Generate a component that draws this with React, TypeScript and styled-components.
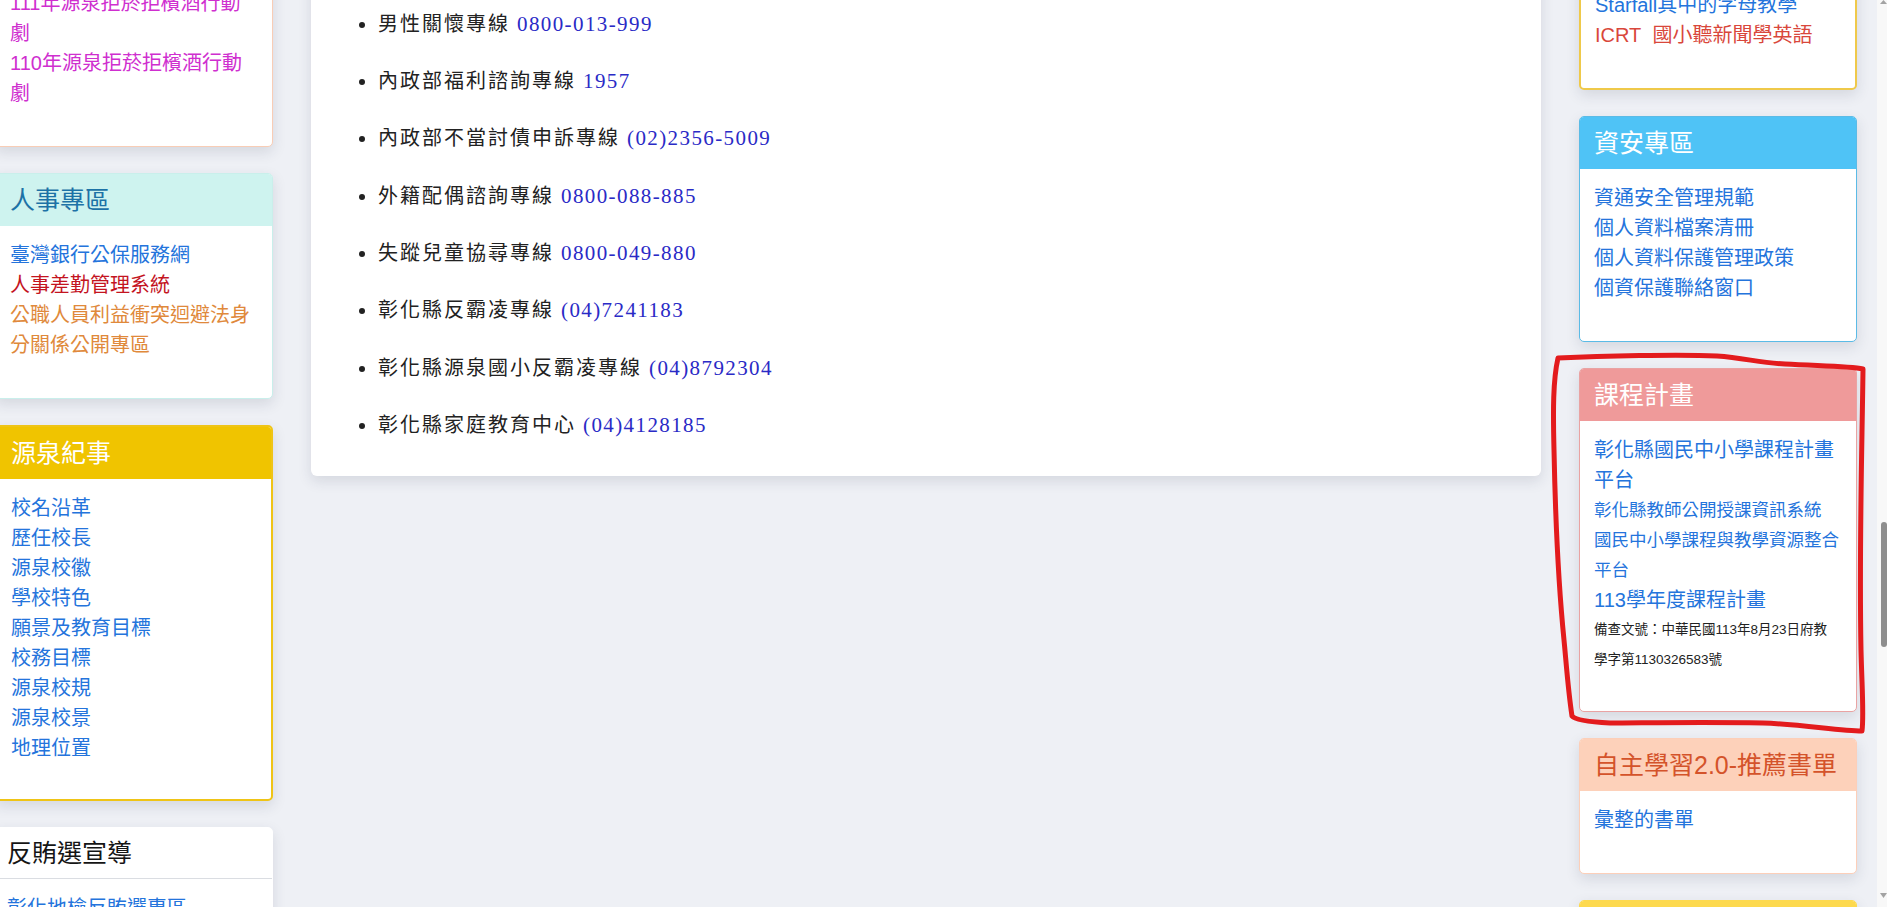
import React from "react";
import styled, { createGlobalStyle } from "styled-components";

const Global = createGlobalStyle`
  html, body {
    margin: 0;
    padding: 0;
    height: 907px;
    overflow: hidden;
    background: #eef0f5;
  }
  body {
    font-family: "Liberation Sans", "Noto Sans CJK TC", sans-serif;
  }
  * { box-sizing: border-box; }
`;

const Viewport = styled.div`
  position: relative;
  display: flex;
  width: 1887px;
  height: 907px;
  overflow: hidden;
  background: #eef0f5;
`;

const Page = styled.div`
  flex: 1;
  display: grid;
  grid-template-columns: 278px 1230px 278px;
  column-gap: 38px;
  align-items: start;
  margin-left: -5px;
`;

const Column = styled.div<{ $offset: number }>`
  display: flex;
  flex-direction: column;
  gap: 26px;
  margin-top: ${(p) => p.$offset}px;
`;

const Card = styled.section<{ $border: string; $bw?: number }>`
  background: #fff;
  border: ${(p) => p.$bw ?? 1}px solid ${(p) => p.$border};
  border-radius: 5px;
  overflow: hidden;
  box-shadow: 0 5px 14px rgba(40, 50, 80, 0.13);
`;

const CardHeader = styled.h3<{ $bg: string; $color: string; $divider?: boolean; $pad?: number }>`
  margin: 0;
  height: ${(p) => (p.$divider ? 51 : 52)}px;
  display: flex;
  align-items: center;
  padding: 0 14px 0 ${(p) => p.$pad ?? 14}px;
  background: ${(p) => p.$bg};
  color: ${(p) => p.$color};
  font-size: 25px;
  font-weight: 400;
  line-height: 1;
  white-space: nowrap;
  border-bottom: ${(p) => (p.$divider ? "1px solid #dadde2" : "none")};
`;

const CardBody = styled.div<{ $pad?: number; $bottom?: number }>`
  display: flex;
  flex-direction: column;
  align-items: flex-start;
  padding: 14px 16px ${(p) => p.$bottom ?? 38}px ${(p) => p.$pad ?? 14}px;
`;

const Link = styled.a<{ $color?: string; $size?: number }>`
  color: ${(p) => p.$color ?? "#2474dc"};
  font-size: ${(p) => p.$size ?? 20}px;
  line-height: 30px;
  text-decoration: none;
  white-space: pre-wrap;
`;

const Note = styled.p`
  margin: 0;
  font-size: 13.5px;
  line-height: 30px;
  color: #222;
`;

const MainCard = styled.section`
  background: #fff;
  border-radius: 6px;
  box-shadow: 0 5px 14px rgba(40, 50, 80, 0.13);
  padding: 20px 26px 22px;
`;

const HotlineList = styled.ul`
  margin: 0;
  padding-left: 41px;
  list-style: disc;
  font-family: "Liberation Serif", "Noto Sans CJK TC", serif;
  font-size: 20px;
  letter-spacing: 2px;
  color: #222;
`;

const Hotline = styled.li`
  line-height: 57.3px;
`;

const Phone = styled.span`
  color: #2a2ac6;
  font-size: 21px;
  letter-spacing: 1.4px;
`;

const Scrollbar = styled.div`
  flex: none;
  width: 10px;
  height: 907px;
  background: #f8f8f8;
  display: flex;
  flex-direction: column;
  align-items: flex-end;
`;

const Arrow = styled.svg`
  display: block;
  flex: none;
`;

const Thumb = styled.div<{ $top: number; $height: number }>`
  flex: none;
  width: 6px;
  margin-top: ${(p) => p.$top}px;
  height: ${(p) => p.$height}px;
  border-radius: 3px;
  background: #8e8e8e;
`;

const Spacer = styled.div`
  flex: 1;
`;

const Annotation = styled.svg`
  position: absolute;
  left: 0;
  top: 0;
  pointer-events: none;
`;

type Item = { text: string; color?: string; size?: number };

type PanelProps = {
  title: string;
  border: string;
  bw?: number;
  bg: string;
  titleColor: string;
  divider?: boolean;
  pad?: number;
  bottom?: number;
  items: Item[];
  note?: string;
};

function Panel({ title, border, bw, bg, titleColor, divider, pad, bottom, items, note }: PanelProps) {
  return (
    <Card $border={border} $bw={bw}>
      <CardHeader $bg={bg} $color={titleColor} $divider={divider} $pad={pad}>
        {title}
      </CardHeader>
      <CardBody $pad={pad} $bottom={bottom}>
        {items.map((it) => (
          <Link key={it.text} href="#" $color={it.color} $size={it.size}>
            {it.text}
          </Link>
        ))}
        {note && <Note>{note}</Note>}
      </CardBody>
    </Card>
  );
}

const MAGENTA = "#cf2fcf";

const hotlines: [string, string][] = [
  ["保護專線", "113"],
  ["反詐騙諮詢專線", "165"],
  ["安心專線", "1925"],
  ["男性關懷專線", "0800-013-999"],
  ["內政部福利諮詢專線", "1957"],
  ["內政部不當討債申訴專線", "(02)2356-5009"],
  ["外籍配偶諮詢專線", "0800-088-885"],
  ["失蹤兒童協尋專線", "0800-049-880"],
  ["彰化縣反霸凌專線", "(04)7241183"],
  ["彰化縣源泉國小反霸凌專線", "(04)8792304"],
  ["彰化縣家庭教育中心", "(04)4128185"],
];

export default function App() {
  return (
    <Viewport>
      <Global />
      <Page>
        <Column $offset={-139}>
          <Panel
            title="健康促進"
            border="#f8cdb6"
            bg="#fde1d2"
            titleColor="#c8552e"
            items={[
              { text: "112年源泉拒菸拒檳酒行動劇", color: MAGENTA },
              { text: "111年源泉拒菸拒檳酒行動劇", color: MAGENTA },
              { text: "110年源泉拒菸拒檳酒行動劇", color: MAGENTA },
            ]}
          />
          <Panel
            title="人事專區"
            border="#c9efeb"
            bg="#cef3ef"
            titleColor="#1d72a6"
            items={[
              { text: "臺灣銀行公保服務網" },
              { text: "人事差勤管理系統", color: "#c4141f" },
              { text: "公職人員利益衝突迴避法身分關係公開專區", color: "#e0893b" },
            ]}
          />
          <Panel
            title="源泉紀事"
            border="#efc416"
            bw={2}
            bg="#f0c400"
            titleColor="#ffffff"
            bottom={36}
            items={[
              { text: "校名沿革" },
              { text: "歷任校長" },
              { text: "源泉校徽" },
              { text: "學校特色" },
              { text: "願景及教育目標" },
              { text: "校務目標" },
              { text: "源泉校規" },
              { text: "源泉校景" },
              { text: "地理位置" },
            ]}
          />
          <Panel
            title="反賄選宣導"
            border="#ffffff"
            bg="#ffffff"
            titleColor="#151515"
            divider
            pad={11}
            items={[{ text: "彰化地檢反賄選專區" }]}
          />
        </Column>

        <Column $offset={-196}>
          <MainCard>
            <HotlineList>
              {hotlines.map(([name, num]) => (
                <Hotline key={name}>
                  {name} <Phone>{num}</Phone>
                </Hotline>
              ))}
            </HotlineList>
          </MainCard>
        </Column>

        <Column $offset={-138}>
          <Panel
            title="英語學習"
            border="#efc94a"
            bw={2}
            bg="#fdd94e"
            titleColor="#ffffff"
            items={[
              { text: "Cool English" },
              { text: "線上英文繪本" },
              { text: "Starfall其中的字母教學" },
              { text: "ICRT\u00a0\u00a0國小聽新聞學英語", color: "#d9473b" },
            ]}
          />
          <Panel
            title="資安專區"
            border="#5bbbe6"
            bg="#4fc3f6"
            titleColor="#ffffff"
            items={[
              { text: "資通安全管理規範" },
              { text: "個人資料檔案清冊" },
              { text: "個人資料保護管理政策" },
              { text: "個資保護聯絡窗口" },
            ]}
          />
          <Panel
            title="課程計畫"
            border="#e9a3a3"
            bg="#ef9a9a"
            titleColor="#ffffff"
            bottom={36}
            items={[
              { text: "彰化縣國民中小學課程計畫平台" },
              { text: "彰化縣教師公開授課資訊系統", size: 17.5 },
              { text: "國民中小學課程與教學資源整合平台", size: 17.5 },
              { text: "113學年度課程計畫" },
            ]}
            note="備查文號：中華民國113年8月23日府教學字第1130326583號"
          />
          <Panel
            title="自主學習2.0-推薦書單"
            border="#fccfb9"
            bg="#fdd1ba"
            titleColor="#d4532a"
            items={[{ text: "彙整的書單" }]}
          />
          <Panel
            title="學習資源"
            border="#fdd94e"
            bg="#fdd94e"
            titleColor="#ffffff"
            items={[{ text: "線上學習平台" }]}
          />
        </Column>
      </Page>

      <Scrollbar>
        <Arrow width="10" height="4" viewBox="0 0 10 4">
          <polygon points="3,4 10,4 6.5,0" fill="#a3a3a3" />
        </Arrow>
        <Thumb $top={518} $height={125} />
        <Spacer />
        <Arrow width="10" height="14" viewBox="0 0 10 14">
          <polygon points="3,0 10,0 6.5,5" fill="#a3a3a3" />
        </Arrow>
      </Scrollbar>

      <Annotation width="1887" height="907" viewBox="0 0 1887 907">
        <path
          d="M1558 358
             C 1600 356, 1680 354, 1717 356
             C 1745 358, 1760 363, 1785 364
             C 1820 366, 1850 366, 1863 369
             C 1862 450, 1859 550, 1861 650
             C 1862 690, 1864 715, 1862 731
             C 1840 731, 1800 724, 1763 723
             C 1700 722, 1640 723, 1610 723
             C 1590 722, 1575 720, 1572 716
             C 1568 690, 1566 660, 1564 640
             C 1558 580, 1555 500, 1554 450
             C 1553 410, 1553 380, 1558 358 Z"
          fill="none"
          stroke="#e31b1d"
          strokeWidth="5"
          strokeLinejoin="round"
          strokeLinecap="round"
        />
      </Annotation>
    </Viewport>
  );
}
